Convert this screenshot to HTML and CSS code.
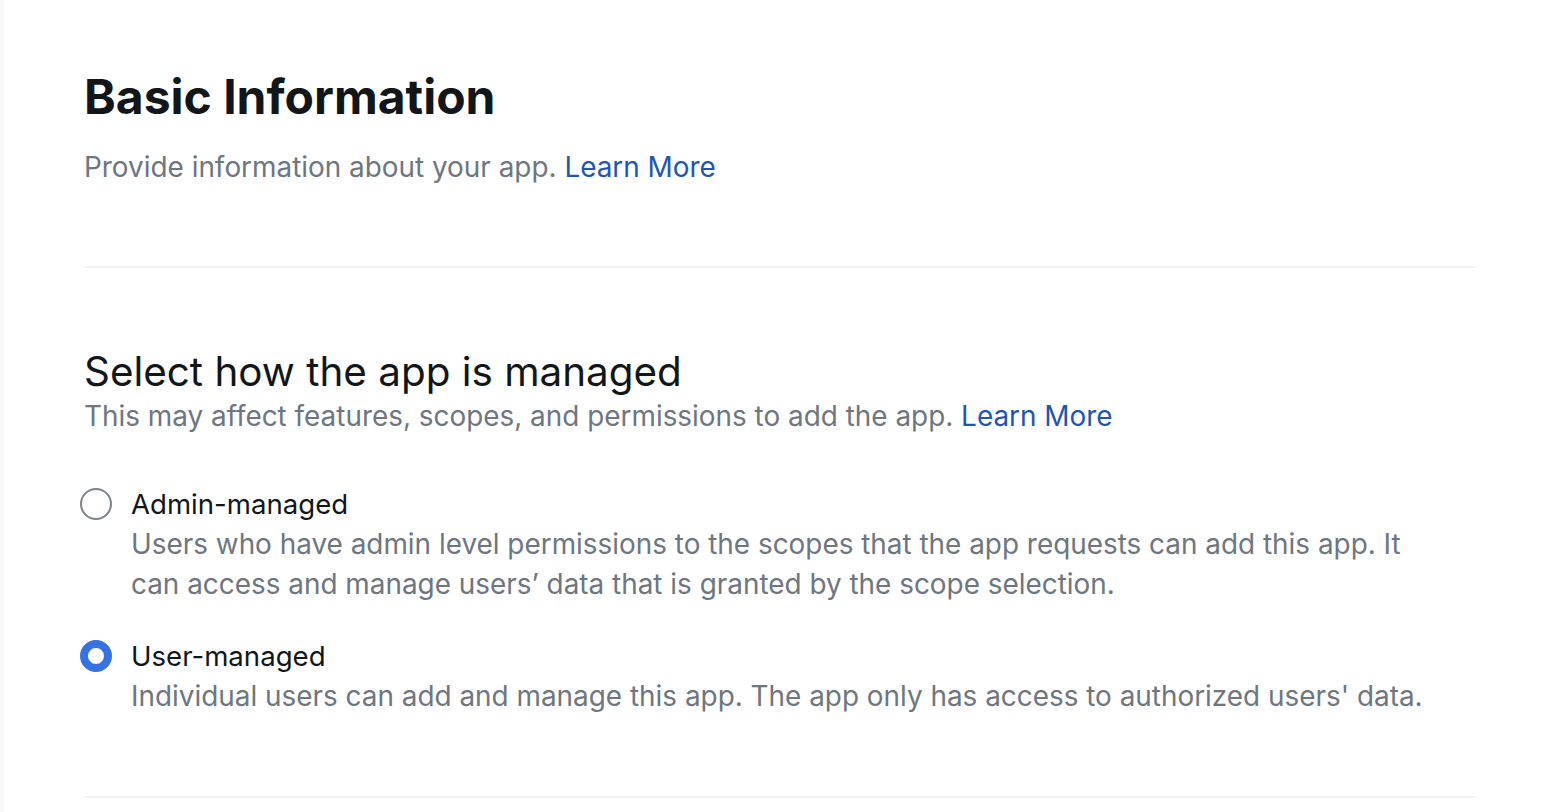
FILE: index.html
```html
<!DOCTYPE html>
<html>
<head>
<meta charset="utf-8">
<link rel="stylesheet" href="styles.css">
</head>
<body>
<div class="page">
  <div class="strip"></div>
  <main class="main">
    <section class="intro">
      <h1 class="title">Basic Information</h1>
      <p class="sub">Provide information about your app. <a class="link" href="#">Learn More</a></p>
    </section>
    <div class="divider first"></div>
    <section class="manage">
      <h2 class="h2">Select how the app is managed</h2>
      <p class="sub2">This may affect features, scopes, and permissions to add the app. <a class="link" href="#">Learn More</a></p>
      <div class="options">
        <label class="option">
          <span class="radio"></span>
          <span class="opt-body">
            <span class="opt-title">Admin-managed</span>
            <span class="opt-desc">Users who have admin level permissions to the scopes that the app requests can add this app. It can access and manage users’ data that is granted by the scope selection.</span>
          </span>
        </label>
        <label class="option">
          <span class="radio checked"></span>
          <span class="opt-body">
            <span class="opt-title">User-managed</span>
            <span class="opt-desc">Individual users can add and manage this app. The app only has access to authorized users' data.</span>
          </span>
        </label>
      </div>
    </section>
    <div class="divider last"></div>
  </main>
</div>
</body>
</html>
```
FILE: styles.css
```css
html, body {
  margin: 0;
  padding: 0;
  background: #fff;
  font-family: Inter, "Noto Sans", sans-serif;
}
.page {
  display: flex;
  min-height: 812px;
}
.strip {
  width: 4px;
  flex: none;
  background: #f7f8fa;
}
.main {
  flex: 1;
  padding: 0 80px 0 80px;
}
.intro {
  padding-top: 68px;
}
.title {
  margin: 0;
  font-size: 48px;
  line-height: 58px;
  font-weight: 700;
  color: #131619;
}
.sub {
  margin: 21px 0 0;
  font-size: 27.9px;
  line-height: 40px;
  color: #6e7680;
}
.link {
  color: #1f56b3;
  text-decoration: none;
}
.divider {
  height: 2px;
  background: #f1f1f1;
}
.divider.first {
  margin-top: 79px;
}
.divider.last {
  margin-top: 80px;
}
.manage {
  padding-top: 80px;
}
.h2 {
  margin: 0;
  font-size: 40.4px;
  line-height: 48px;
  font-weight: 400;
  color: #131619;
}
.sub2 {
  margin: 0;
  font-size: 27.9px;
  line-height: 40px;
  color: #6e7680;
}
.options {
  margin-top: 48px;
  display: flex;
  flex-direction: column;
  gap: 32px;
}
.option {
  display: flex;
  gap: 19px;
  align-items: flex-start;
  margin-left: -4px;
}
.radio {
  flex: none;
  width: 32px;
  height: 32px;
  box-sizing: border-box;
  border: 2px solid #7c838c;
  border-radius: 50%;
  margin-top: 4px;
}
.radio.checked {
  border: 8.5px solid #3572e3;
}
.opt-body {
  display: flex;
  flex-direction: column;
  padding-right: 40px;
}
.opt-title {
  font-size: 27.6px;
  line-height: 40px;
  color: #131619;
}
.opt-desc {
  font-size: 27.9px;
  line-height: 40px;
  color: #6e7680;
}
```
